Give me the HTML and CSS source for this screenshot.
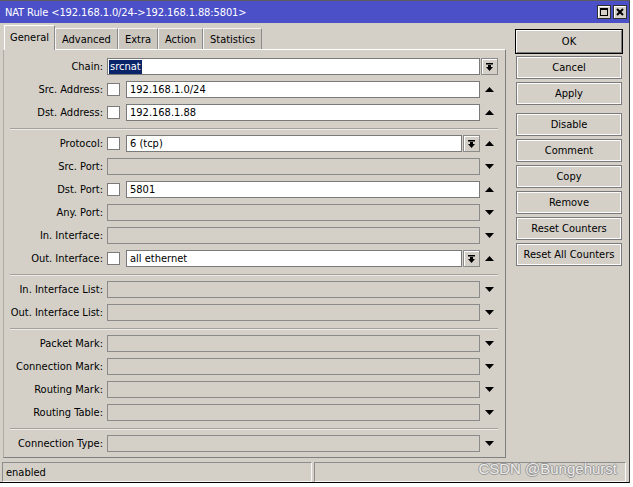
FILE: index.html
```html
<!DOCTYPE html>
<html>
<head>
<meta charset="utf-8">
<link rel="stylesheet" href="styles.css">
</head>
<body>
<div class="window">
  <div class="titlebar">
    <span class="title">NAT Rule &lt;192.168.1.0/24-&gt;192.168.1.88:5801&gt;</span>
    <div class="tbtns">
      <span class="tb"><svg width="8" height="8" viewBox="0 0 8 8"><rect x="0.5" y="0.5" width="7" height="7" fill="none" stroke="#000"/><rect x="0" y="0" width="8" height="2" fill="#000"/></svg></span>
      <span class="tb"><svg width="8" height="8" viewBox="0 0 8 8"><path d="M1 1 L7 7 M7 1 L1 7" stroke="#000" stroke-width="2"/></svg></span>
    </div>
  </div>
  <div class="main">
    <div class="left">
      <div class="tabs">
        <div class="tab active">General</div>
        <div class="tab">Advanced</div>
        <div class="tab">Extra</div>
        <div class="tab">Action</div>
        <div class="tab">Statistics</div>
      </div>
      <div class="panel">
        <div class="row">
          <div class="lbl">Chain:</div>
          <div class="area"><div class="input"><span class="sel">srcnat</span></div></div>
          <div class="slot"><span class="dd"><svg width="7" height="8" viewBox="0 0 7 8"><rect x="0" y="0" width="7" height="1.5" fill="#000"/><rect x="2" y="2" width="3" height="2" fill="#000"/><polygon points="0,4 7,4 3.5,8" fill="#000"/></svg></span></div>
        </div>
        <div class="row">
          <div class="lbl">Src. Address:</div>
          <div class="area"><span class="cb"></span><div class="input">192.168.1.0/24</div></div>
          <div class="slot"><svg class="arr" width="9" height="5" viewBox="0 0 9 5"><polygon points="0,5 9,5 4.5,0" fill="#000"/></svg></div>
        </div>
        <div class="row">
          <div class="lbl">Dst. Address:</div>
          <div class="area"><span class="cb"></span><div class="input">192.168.1.88</div></div>
          <div class="slot"><svg class="arr" width="9" height="5" viewBox="0 0 9 5"><polygon points="0,5 9,5 4.5,0" fill="#000"/></svg></div>
        </div>
        <div class="sep"></div>
        <div class="row">
          <div class="lbl">Protocol:</div>
          <div class="area"><span class="cb"></span><div class="input">6 (tcp)</div><span class="dd"><svg width="7" height="8" viewBox="0 0 7 8"><rect x="0" y="0" width="7" height="1.5" fill="#000"/><rect x="2" y="2" width="3" height="2" fill="#000"/><polygon points="0,4 7,4 3.5,8" fill="#000"/></svg></span></div>
          <div class="slot"><svg class="arr" width="9" height="5" viewBox="0 0 9 5"><polygon points="0,5 9,5 4.5,0" fill="#000"/></svg></div>
        </div>
        <div class="row">
          <div class="lbl">Src. Port:</div>
          <div class="area"><div class="input dis"></div></div>
          <div class="slot"><svg class="arr" width="9" height="5" viewBox="0 0 9 5"><polygon points="0,0 9,0 4.5,5" fill="#000"/></svg></div>
        </div>
        <div class="row">
          <div class="lbl">Dst. Port:</div>
          <div class="area"><span class="cb"></span><div class="input">5801</div></div>
          <div class="slot"><svg class="arr" width="9" height="5" viewBox="0 0 9 5"><polygon points="0,5 9,5 4.5,0" fill="#000"/></svg></div>
        </div>
        <div class="row">
          <div class="lbl">Any. Port:</div>
          <div class="area"><div class="input dis"></div></div>
          <div class="slot"><svg class="arr" width="9" height="5" viewBox="0 0 9 5"><polygon points="0,0 9,0 4.5,5" fill="#000"/></svg></div>
        </div>
        <div class="row">
          <div class="lbl">In. Interface:</div>
          <div class="area"><div class="input dis"></div></div>
          <div class="slot"><svg class="arr" width="9" height="5" viewBox="0 0 9 5"><polygon points="0,0 9,0 4.5,5" fill="#000"/></svg></div>
        </div>
        <div class="row">
          <div class="lbl">Out. Interface:</div>
          <div class="area"><span class="cb"></span><div class="input">all ethernet</div><span class="dd"><svg width="7" height="8" viewBox="0 0 7 8"><rect x="0" y="0" width="7" height="1.5" fill="#000"/><rect x="2" y="2" width="3" height="2" fill="#000"/><polygon points="0,4 7,4 3.5,8" fill="#000"/></svg></span></div>
          <div class="slot"><svg class="arr" width="9" height="5" viewBox="0 0 9 5"><polygon points="0,5 9,5 4.5,0" fill="#000"/></svg></div>
        </div>
        <div class="sep"></div>
        <div class="row">
          <div class="lbl">In. Interface List:</div>
          <div class="area"><div class="input dis"></div></div>
          <div class="slot"><svg class="arr" width="9" height="5" viewBox="0 0 9 5"><polygon points="0,0 9,0 4.5,5" fill="#000"/></svg></div>
        </div>
        <div class="row">
          <div class="lbl">Out. Interface List:</div>
          <div class="area"><div class="input dis"></div></div>
          <div class="slot"><svg class="arr" width="9" height="5" viewBox="0 0 9 5"><polygon points="0,0 9,0 4.5,5" fill="#000"/></svg></div>
        </div>
        <div class="sep"></div>
        <div class="row">
          <div class="lbl">Packet Mark:</div>
          <div class="area"><div class="input dis"></div></div>
          <div class="slot"><svg class="arr" width="9" height="5" viewBox="0 0 9 5"><polygon points="0,0 9,0 4.5,5" fill="#000"/></svg></div>
        </div>
        <div class="row">
          <div class="lbl">Connection Mark:</div>
          <div class="area"><div class="input dis"></div></div>
          <div class="slot"><svg class="arr" width="9" height="5" viewBox="0 0 9 5"><polygon points="0,0 9,0 4.5,5" fill="#000"/></svg></div>
        </div>
        <div class="row">
          <div class="lbl">Routing Mark:</div>
          <div class="area"><div class="input dis"></div></div>
          <div class="slot"><svg class="arr" width="9" height="5" viewBox="0 0 9 5"><polygon points="0,0 9,0 4.5,5" fill="#000"/></svg></div>
        </div>
        <div class="row">
          <div class="lbl">Routing Table:</div>
          <div class="area"><div class="input dis"></div></div>
          <div class="slot"><svg class="arr" width="9" height="5" viewBox="0 0 9 5"><polygon points="0,0 9,0 4.5,5" fill="#000"/></svg></div>
        </div>
        <div class="sep"></div>
        <div class="row">
          <div class="lbl">Connection Type:</div>
          <div class="area"><div class="input dis"></div></div>
          <div class="slot"><svg class="arr" width="9" height="5" viewBox="0 0 9 5"><polygon points="0,0 9,0 4.5,5" fill="#000"/></svg></div>
        </div>
      </div>
    </div>
    <div class="btns">
      <div class="btn default">OK</div>
      <div class="btn">Cancel</div>
      <div class="btn">Apply</div>
      <div class="btn gap">Disable</div>
      <div class="btn">Comment</div>
      <div class="btn">Copy</div>
      <div class="btn">Remove</div>
      <div class="btn">Reset Counters</div>
      <div class="btn">Reset All Counters</div>
    </div>
  </div>
  <div class="status">
    <div class="cell first">enabled</div>
    <div class="cell second"></div>
  </div>
  <div class="watermark">CSDN @Bungehurst</div>
</div>
</body>
</html>
```
FILE: styles.css
```css
html, body {
  margin: 0;
  padding: 0;
  background: #ffffff;
}
body {
  font-family: "DejaVu Sans Condensed", "Liberation Sans", sans-serif;
  font-size: 11px;
  color: #000;
}
.window {
  position: relative;
  width: 630px;
  height: 483px;
  box-sizing: border-box;
  border-top: 1px solid #5c5c5c;
  border-right: 1px solid #404040;
  border-bottom: 1px solid #000;
  background: #d4d0c8;
  display: flex;
  flex-direction: column;
}
.titlebar {
  height: 22px;
  flex: none;
  background: #4b50c9;
  color: #fff;
  display: flex;
  align-items: center;
  justify-content: space-between;
  padding: 0 2px 0 5px;
}
.title {
  font-size: 11px;
  letter-spacing: -0.1px;
  white-space: nowrap;
}
.tbtns {
  display: flex;
  gap: 2px;
}
.tb {
  width: 14px;
  height: 14px;
  box-sizing: border-box;
  background: #d4d0c8;
  border: 1px solid #303030;
  box-shadow: inset 1px 1px #fff;
  display: flex;
  align-items: center;
  justify-content: center;
}
.main {
  display: flex;
  padding: 2px 0 0 3px;
  gap: 10px;
  flex: none;
}
.left {
  width: 503px;
  display: flex;
  flex-direction: column;
}
.tabs {
  display: flex;
  align-items: flex-end;
  height: 24px;
  padding-left: 1px;
}
.tab {
  height: 21px;
  box-sizing: border-box;
  padding: 0 6px;
  display: flex;
  align-items: center;
  background: #cbc7bf;
  border-top: 1px solid #f4f4f4;
  border-left: 1px solid #f4f4f4;
  border-right: 1px solid #8a8a8a;
  white-space: nowrap;
}
.tab.active {
  height: 25px;
  margin-bottom: -1px;
  background: #d4d0c8;
  border-top: 1px solid #fff;
  border-left: 1px solid #fff;
  position: relative;
  z-index: 1;
  padding: 0 5px 2px 5px;
}
.panel {
  border: 1px solid;
  border-color: #fff #808080 #808080 #b0aca4;
  padding: 5px 0 2px 0;
}
.row {
  display: flex;
  align-items: center;
  height: 23px;
}
.lbl {
  width: 99px;
  margin-right: 4px;
  flex: none;
  text-align: right;
  white-space: nowrap;
}
.area {
  width: 373px;
  flex: none;
  display: flex;
  align-items: center;
}
.slot {
  width: 17px;
  margin-left: 1px;
  flex: none;
  display: flex;
  align-items: center;
  justify-content: center;
}
.cb {
  width: 13px;
  height: 13px;
  box-sizing: border-box;
  border: 1px solid #7a7a7a;
  background: #fff;
  margin-right: 6px;
  flex: none;
}
.input {
  flex: 1;
  height: 17px;
  box-sizing: border-box;
  border: 1px solid #7a7a7a;
  background: #fff;
  padding-left: 3px;
  line-height: 15px;
  white-space: nowrap;
  overflow: hidden;
}
.input.dis {
  background: #d4d0c8;
  border-color: #8a8a8a;
}
.sel {
  background: #0a246a;
  color: #fff;
  margin-left: -2px;
  padding: 0 1px;
  display: inline-block;
  line-height: 14px;
}
.dd {
  width: 17px;
  height: 17px;
  box-sizing: border-box;
  margin-left: 1px;
  border: 1px solid #8a8a8a;
  box-shadow: inset 1px 1px #fff;
  background: #d4d0c8;
  display: flex;
  align-items: center;
  justify-content: center;
  flex: none;
}
.slot .dd {
  margin-left: 0;
}
.sep {
  height: 8px;
  margin: 0 7px 0 6px;
  display: flex;
  align-items: center;
}
.sep::before {
  content: "";
  display: block;
  width: 100%;
  height: 1px;
  background: #a4a09a;
  box-shadow: 0 1px #ecebe8;
}
.btns {
  width: 106px;
  display: flex;
  flex-direction: column;
  gap: 3px;
  padding-top: 5px;
}
.btn {
  height: 23px;
  box-sizing: border-box;
  border: 1px solid #7a7a7a;
  box-shadow: inset 0 0 0 1px #fbfbfb;
  display: flex;
  align-items: center;
  justify-content: center;
  white-space: nowrap;
}
.btn.default {
  outline: 1px solid #000;
  border-color: #fff #7a7a7a #7a7a7a #fff;
  box-shadow: none;
}
.btn.gap {
  margin-top: 5px;
}
.status {
  flex: 1;
  display: flex;
  gap: 2px;
  padding: 4px 2px 2px 2px;
}
.cell {
  height: 20px;
  box-sizing: border-box;
  border: 1px solid;
  border-color: #8c8c8c #f8f8f8 #f8f8f8 #8c8c8c;
  padding-left: 3px;
  display: flex;
  align-items: center;
}
.cell.first {
  width: 310px;
}
.cell.second {
  flex: 1;
  margin-right: 1px;
}
.watermark {
  position: absolute;
  right: 12px;
  bottom: 5px;
  font-family: "Liberation Sans", sans-serif;
  font-size: 15px;
  color: #ecebe8;
  text-shadow: -1px 0 #9a9a9a, 1px 0 #9a9a9a, 0 -1px #9a9a9a, 0 1px #9a9a9a;
  white-space: nowrap;
}
```
